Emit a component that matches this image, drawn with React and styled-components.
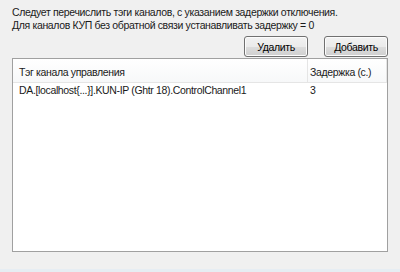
import styled, { createGlobalStyle } from 'styled-components';

const GlobalStyle = createGlobalStyle`
  html, body {
    margin: 0;
    padding: 0;
    background: #f0f0f0;
  }
  body {
    font-family: 'Liberation Sans', Arial, sans-serif;
    font-size: 10.5px;
    letter-spacing: -0.35px;
    color: #1a1a1a;
  }
`;

const Window = styled.div`
  width: 400px;
  height: 272px;
  box-sizing: border-box;
  background: #f0f0f0;
  display: flex;
  flex-direction: column;
  border-bottom: 3px solid #e6edf3;
`;

const Content = styled.div`
  flex: 1;
  padding: 6px 12px 0 12px;
  display: flex;
  flex-direction: column;
`;

const Note = styled.div`
  line-height: 13px;
  height: 13px;
  white-space: nowrap;
`;

const Toolbar = styled.div`
  display: flex;
  justify-content: flex-end;
  gap: 16px;
  margin-top: 4px;
`;

const Button = styled.button`
  width: 64px;
  height: 21px;
  padding: 0;
  font: inherit;
  letter-spacing: inherit;
  color: #000;
  border: 1px solid #707070;
  border-radius: 3px;
  background: linear-gradient(#f2f2f2 0%, #ebebeb 50%, #dddddd 51%, #cfcfcf 100%);
  box-shadow: inset 0 0 0 1px #fcfcfc;
`;

const Table = styled.div`
  margin-top: 1px;
  height: 194px;
  box-sizing: border-box;
  border: 1px solid #a0a0a0;
  background: #fff;
  display: flex;
  flex-direction: column;
`;

const HeaderRow = styled.div`
  display: grid;
  grid-template-columns: 295px 79px;
  height: 23px;
  border-bottom: 1px solid #e5e5e5;
  background: linear-gradient(#ffffff, #f7f8f9);
`;

const HeaderCell = styled.div`
  display: flex;
  align-items: center;
  padding: 3px 0 0 ${p => p.$pad}px;
  border-right: 1px solid #e5e5e5;
  white-space: nowrap;
`;

const Row = styled.div`
  display: grid;
  grid-template-columns: 295px 79px;
  height: 14px;
`;

const Cell = styled.div`
  display: flex;
  align-items: center;
  padding-left: ${p => p.$pad}px;
  white-space: nowrap;
`;

const tag = 'DA.[localhost{...}].KUN-IP (Ghtr 18).ControlChannel1';

export default function App() {
  return (
    <Window>
      <GlobalStyle />
      <Content>
        <Note>Следует перечислить тэги каналов, с указанием задержки отключения.</Note>
        <Note>Для каналов КУП без обратной связи устанавливать задержку = 0</Note>
        <Toolbar>
          <Button>Удалить</Button>
          <Button>Добавить</Button>
        </Toolbar>
        <Table>
          <HeaderRow>
            <HeaderCell $pad={6}>Тэг канала управления</HeaderCell>
            <HeaderCell $pad={2}>Задержка (с.)</HeaderCell>
          </HeaderRow>
          <Row>
            <Cell $pad={6}>{tag}</Cell>
            <Cell $pad={2}>3</Cell>
          </Row>
        </Table>
      </Content>
    </Window>
  );
}
